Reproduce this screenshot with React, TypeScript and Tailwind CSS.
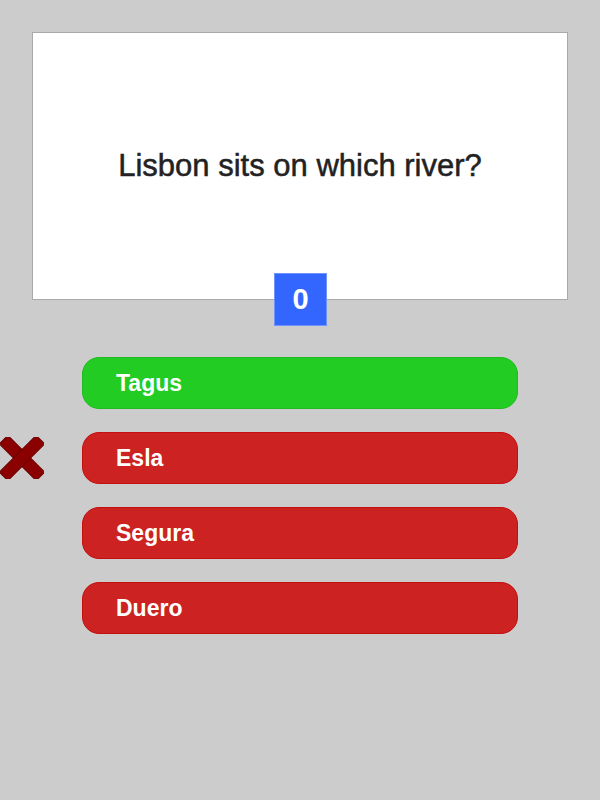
import { Fragment } from 'react';

const ANSWERS = [
  { label: 'Tagus', correct: true, picked: false },
  { label: 'Esla', correct: false, picked: true },
  { label: 'Segura', correct: false, picked: false },
  { label: 'Duero', correct: false, picked: false },
];

function WrongMark() {
  return (
    <svg width="44" height="42" viewBox="0 0 44 42" className="absolute left-0 top-1/2 -translate-y-1/2">
      <g fill="#8b0000" stroke="#6e0000" strokeWidth="1">
        <rect x="-4" y="15" width="52" height="12" rx="2" transform="rotate(45 22 21)" />
        <rect x="-4" y="15" width="52" height="12" rx="2" transform="rotate(-45 22 21)" />
      </g>
    </svg>
  );
}

export default function App() {
  return (
    <div className="w-[600px] h-[800px] bg-[#cccccc] pt-8" style={{ fontFamily: '"Liberation Sans", Arial, sans-serif' }}>
      <div className="relative mx-8 h-[268px] bg-white border border-[#aaaaaa] flex items-center justify-center">
        <div className="text-[31px] text-[#222222] [-webkit-text-stroke:0.5px_#222222]">Lisbon sits on which river?</div>
        <div className="absolute left-[241px] top-[240px] w-[53px] h-[53px] bg-[#3366ff] border border-[#6f94ff] flex items-center justify-center text-white text-[29px] font-bold">
          0
        </div>
      </div>

      <div className="mt-[57px] flex flex-col gap-[23px]">
        {ANSWERS.map((a) => (
          <Fragment key={a.label}>
            <div className="relative h-[52px]">
              {a.picked && <WrongMark />}
              <div
                className={
                  'ml-[82px] w-[436px] h-[52px] rounded-[17px] border flex items-center pl-[33px] text-white text-[23px] font-bold ' +
                  (a.correct ? 'bg-[#22cc22] border-[#1fbb1f]' : 'bg-[#cc2222] border-[#c40f0f]')
                }
              >
                {a.label}
              </div>
            </div>
          </Fragment>
        ))}
      </div>
    </div>
  );
}
